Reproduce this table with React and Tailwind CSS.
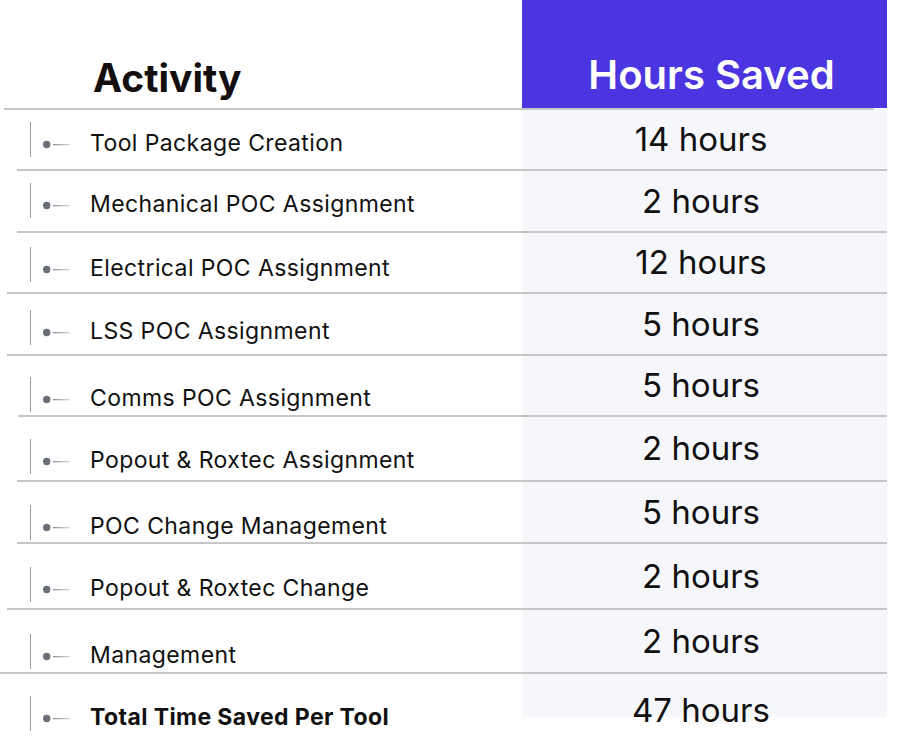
import React from "react";

const rows = [
  { label: "Tool Package Creation", hours: "14 hours", h: "h-[59px]", off: "pt-[12px]", line: "ml-[17px]" },
  { label: "Mechanical POC Assignment", hours: "2 hours", h: "h-[60px]", off: "pt-[12px]", line: "ml-[17px]" },
  { label: "Electrical POC Assignment", hours: "12 hours", h: "h-[59px]", off: "pt-[14px]", line: "ml-[7px]" },
  { label: "LSS POC Assignment", hours: "5 hours", h: "h-[60px]", off: "pt-[16px]", line: "ml-[7px]" },
  { label: "Comms POC Assignment", hours: "5 hours", h: "h-[59px]", off: "pt-[21px]", line: "ml-[18px]" },
  { label: "Popout & Roxtec Assignment", hours: "2 hours", h: "h-[63px]", off: "pt-[22px]", line: "ml-[17px]" },
  { label: "POC Change Management", hours: "5 hours", h: "h-[60px]", off: "pt-[23px]", line: "ml-[17px]" },
  { label: "Popout & Roxtec Change", hours: "2 hours", h: "h-[64px]", off: "pt-[23px]", line: "ml-[7px]" },
  { label: "Management", hours: "2 hours", h: "h-[62px]", off: "pt-[24px]", line: "ml-0" },
];

function Bullet() {
  return (
    <div className="flex items-start">
      <div className="w-px h-[35px] bg-[#9c9c9c]" />
      <svg width="42" height="35" viewBox="0 0 42 35" className="shrink-0">
        <defs>
          <linearGradient id="tail" x1="0" x2="1" y1="0" y2="0">
            <stop offset="0" stopColor="#8a8f98" />
            <stop offset="1" stopColor="#d9dbe0" />
          </linearGradient>
        </defs>
        <circle cx="15.7" cy="22.5" r="3.7" fill="#6b6f78" />
        <rect x="22" y="22" width="17" height="1.3" fill="url(#tail)" />
      </svg>
    </div>
  );
}

function Row({ label, hours, h, off, bold, last }) {
  return (
    <div className={`flex ${h}`}>
      <div className={`w-[523px] ${off} pl-[30px] flex items-start`}>
        <Bullet />
        <span
          className={`ml-[17px] mt-[10px] text-[23px] leading-[23px] tracking-[0.4px] text-[#111111] whitespace-nowrap ${
            bold ? "font-bold" : "font-normal"
          }`}
        >
          {label}
        </span>
      </div>
      <div
        className={`flex-1 bg-[#f6f7fb] flex justify-center pr-[8px] ${
          last ? "items-start pt-[20px]" : "items-center"
        }`}
      >
        <span className="text-[33px] leading-[33px] text-[#111111] whitespace-nowrap">{hours}</span>
      </div>
    </div>
  );
}

export default function App() {
  return (
    <div
      className="w-[908px] h-[753px] bg-white overflow-hidden"
      style={{ fontFamily: "Inter, 'Liberation Sans', sans-serif" }}
    >
      <div className="w-[887px]">
        <div className="flex h-[108px]">
          <div className="w-[523px] flex items-end pl-[93px] pb-[11px]">
            <h1 className="text-[39px] leading-[39px] font-bold text-[#140e0e]">Activity</h1>
          </div>
          <div className="w-[365px] shrink-0 bg-[#4a35e0] flex items-end justify-center pl-[14px] pb-[13px]">
            <h2 className="text-[40px] leading-[40px] font-semibold text-white whitespace-nowrap">Hours Saved</h2>
          </div>
        </div>
        <div className="h-[2px] ml-[4px] w-[870px] bg-[#c6c6c6]" />

        {rows.map((r) => (
          <React.Fragment key={r.label}>
            <Row {...r} />
            <div className={`h-[2px] ${r.line} bg-[#c6c6c6]`} />
          </React.Fragment>
        ))}

        <Row
          label="Total Time Saved Per Tool"
          hours="47 hours"
          h="h-[43px]"
          off="pt-[22px]"
          bold
          last
        />
      </div>
    </div>
  );
}
